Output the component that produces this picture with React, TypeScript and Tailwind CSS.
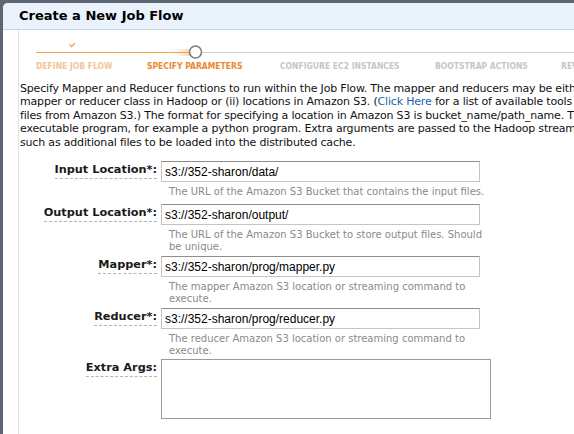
const steps = [
  { label: "DEFINE JOB FLOW", w: "w-[111px]", color: "text-[#f4c594]" },
  { label: "SPECIFY PARAMETERS", w: "w-[133px]", color: "text-[#e8892e]" },
  { label: "CONFIGURE EC2 INSTANCES", w: "w-[155px]", color: "text-[#c6c6c6]" },
  { label: "BOOTSTRAP ACTIONS", w: "w-[126px]", color: "text-[#c6c6c6]" },
  { label: "REVIEW", w: "w-[60px]", color: "text-[#c6c6c6]" },
];

const fields = [
  {
    label: "Input Location*:",
    value: "s3://352-sharon/data/",
    help: "The URL of the Amazon S3 Bucket that contains the input files.",
    gap: "mb-[6px]",
  },
  {
    label: "Output Location*:",
    value: "s3://352-sharon/output/",
    help: "The URL of the Amazon S3 Bucket to store output files. Should be unique.",
    gap: "mb-[3px]",
  },
  {
    label: "Mapper*:",
    value: "s3://352-sharon/prog/mapper.py",
    help: "The mapper Amazon S3 location or streaming command to execute.",
    gap: "mb-[3px]",
  },
  {
    label: "Reducer*:",
    value: "s3://352-sharon/prog/reducer.py",
    help: "The reducer Amazon S3 location or streaming command to execute.",
    gap: "mb-[2px]",
  },
];

const FieldLabel = ({ text }: { text: string }) => (
  <div className="w-[137px] shrink-0 flex justify-end items-start pt-[2px]">
    <span className="font-['DejaVu_Sans',sans-serif] text-[11.3px] font-bold leading-[14px] text-[#1a1a1a] border-b border-dashed border-[#b5b5b5] pb-[1px] whitespace-nowrap">
      {text}
    </span>
  </div>
);

const App = () => {
  return (
    <div className="w-[574px] h-[434px] overflow-hidden bg-[#5d6672] pl-[3px] pt-[3px]">
      <div className="h-full bg-white rounded-tl-[5px] overflow-hidden flex flex-col">
        {/* Header */}
        <div className="h-[27px] shrink-0 bg-[#eaf2fc] border-b border-[#bcd6ef] flex items-center pl-[16px]">
          <h1 className="font-['DejaVu_Sans',sans-serif] text-[13px] font-bold text-black whitespace-nowrap">
            Create a New Job Flow
          </h1>
        </div>

        <div className="flex-1 ml-[15px] border-l border-[#e2e2e2] pl-[1px]">
          {/* Progress */}
          <div className="pt-[10px]">
            <svg width="560" height="20" viewBox="0 0 560 20" className="block">
              <defs>
                <linearGradient id="glow" x1="0" x2="1" y1="0" y2="0">
                  <stop offset="0" stopColor="#f3a14f" stopOpacity="0" />
                  <stop offset="1" stopColor="#f3a14f" stopOpacity="0.9" />
                </linearGradient>
              </defs>
              <line x1="16" y1="12.5" x2="170" y2="12.5" stroke="#f2a65c" strokeWidth="1" />
              <line x1="182" y1="12.5" x2="560" y2="12.5" stroke="#d2d2d2" strokeWidth="1" />
              <rect x="152" y="9" width="20" height="2" fill="url(#glow)" opacity="0.5" />
              <rect x="150" y="11.5" width="22" height="2" fill="url(#glow)" />
              <rect x="154" y="14" width="18" height="2" fill="url(#glow)" opacity="0.5" />
              <circle cx="175.5" cy="12" r="6" fill="#ffffff" stroke="#7d7d7d" strokeWidth="1.6" />
              <path d="M49.5 4.5 L51.5 6.5 L55 3" fill="none" stroke="#f3b072" strokeWidth="1.6" />
            </svg>
            <div className="flex pl-[16px]">
              {steps.map((s) => (
                <div
                  key={s.label}
                  className={`${s.w} shrink-0 whitespace-nowrap font-['DejaVu_Sans_Condensed','DejaVu_Sans',sans-serif] font-bold text-[8.5px] leading-[12px] ${s.color}`}
                >
                  {s.label}
                </div>
              ))}
            </div>
          </div>

          {/* Intro */}
          <div className="mt-[10px] font-['DejaVu_Sans',sans-serif] text-[11px] tracking-[-0.18px] leading-[13.4px] text-[#111] whitespace-nowrap">
            <p>
              Specify Mapper and Reducer functions to run within the Job Flow. The mapper and reducers may be either (i) class names referring to a
            </p>
            <p>
              mapper or reducer class in Hadoop or (ii) locations in Amazon S3. (
              <a href="#" className="text-[#1d5fae]">Click Here</a> for a list of available tools for downloading
            </p>
            <p>
              files from Amazon S3.) The format for specifying a location in Amazon S3 is bucket_name/path_name. The location should point to an
            </p>
            <p>
              executable program, for example a python program. Extra arguments are passed to the Hadoop streaming program and can specify things
            </p>
            <p>such as additional files to be loaded into the distributed cache.</p>
          </div>

          {/* Form */}
          <div className="mt-[12px]">
            {fields.map((f) => (
              <div key={f.label} className={`flex ${f.gap}`}>
                <FieldLabel text={f.label} />
                <div className="ml-[4px]">
                  <input
                    readOnly
                    value={f.value}
                    className="block w-[319px] h-[21px] px-[3px] bg-white border border-[#c4c4c4] border-t-[#8e8e8e] font-['Liberation_Sans',sans-serif] text-[12px] text-black outline-none"
                  />
                  <p className="mt-[4px] pl-[8px] w-[330px] font-['DejaVu_Sans',sans-serif] text-[10px] leading-[12px] text-[#8a8a8a]">
                    {f.help}
                  </p>
                </div>
              </div>
            ))}
            <div className="flex">
              <FieldLabel text="Extra Args:" />
              <textarea
                readOnly
                className="ml-[4px] block w-[330px] h-[60px] border border-[#9a9a9a] bg-white resize-none outline-none"
              />
            </div>
          </div>
        </div>
      </div>
    </div>
  );
};

export default App;
